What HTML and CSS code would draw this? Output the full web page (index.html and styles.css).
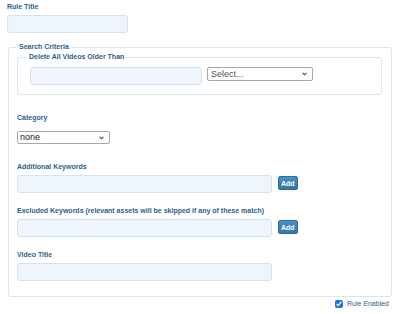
FILE: index.html
```html
<!DOCTYPE html>
<html lang="en">
<head>
    <meta charset="UTF-8">
    <title>Rule Editor</title>
    <link rel="stylesheet" href="styles.css">
</head>
<body>
    <form class="rule-form" autocomplete="off">
        <div class="field">
            <label for="ruleTitle">Rule Title</label>
            <input type="text" id="ruleTitle" class="text-input title-input">
        </div>

        <fieldset class="criteria">
            <legend>Search Criteria</legend>

            <fieldset class="age-group">
                <legend>Delete All Videos Older Than</legend>
                <div class="age-row">
                    <input type="text" id="ageValue" class="text-input age-input">
                    <select id="ageUnit" class="native-select unit-select">
                        <option>Select...</option>
                        <option>Days</option>
                        <option>Weeks</option>
                        <option>Months</option>
                    </select>
                </div>
            </fieldset>

            <div class="field category-field">
                <label for="category">Category</label>
                <select id="category" class="native-select category-select">
                    <option>none</option>
                </select>
            </div>

            <div class="field keyword-field first-keyword">
                <label for="addKeywords">Additional Keywords</label>
                <div class="add-row">
                    <input type="text" id="addKeywords" class="text-input wide-input">
                    <button type="button" class="add-btn">Add</button>
                </div>
            </div>

            <div class="field keyword-field">
                <label for="excKeywords">Excluded Keywords (relevant assets will be skipped if any of these match)</label>
                <div class="add-row">
                    <input type="text" id="excKeywords" class="text-input wide-input">
                    <button type="button" class="add-btn">Add</button>
                </div>
            </div>

            <div class="field keyword-field">
                <label for="videoTitle">Video Title</label>
                <input type="text" id="videoTitle" class="text-input wide-input">
            </div>
        </fieldset>

        <div class="enabled-row">
            <input type="checkbox" id="ruleEnabled" checked>
            <label for="ruleEnabled">Rule Enabled</label>
        </div>
    </form>
</body>
</html>
```

FILE: styles.css
```css
body {
    margin: 0;
    background: #fff;
    font-family: 'Liberation Sans', Arial, sans-serif;
    font-size: 7px;
    color: #2d5e8b;
}
.rule-form {
    padding: 2px 8px 0 7px;
}
.field label {
    display: block;
    font-weight: bold;
    line-height: 10px;
    margin-bottom: 3px;
    color: #2d5e8b;
}
.text-input {
    box-sizing: border-box;
    height: 18px;
    margin: 0;
    padding: 0 4px;
    background: #eef5fd;
    border: 1px solid #d2e2f1;
    border-radius: 3px;
    font-family: inherit;
    font-size: 9px;
    outline: none;
}
.title-input {
    width: 121px;
}
fieldset {
    margin: 0;
    border: 1px solid #d9e6f1;
    border-radius: 3px;
    min-width: 0;
}
legend {
    padding: 0 2px;
    font-weight: bold;
    line-height: 10px;
    color: #2d5e8b;
}
.criteria {
    margin: 9px 0 0 1px;
    padding: 0 9px 15px 8px;
}
.age-group {
    padding: 5px 9px 9px 9px;
}
.age-row {
    display: flex;
    align-items: flex-start;
    gap: 5px;
    padding-left: 3px;
}
.age-input {
    width: 172px;
}
/* plain select with a small chevron like the old browser default */
.native-select {
    box-sizing: border-box;
    height: 14px;
    margin: 0;
    padding: 0 10px 0 3px;
    appearance: none;
    background: #fff url("data:image/svg+xml,%3Csvg xmlns='http://www.w3.org/2000/svg' width='5' height='4' viewBox='0 0 5 4'%3E%3Cpath d='M0.6 0.8 L2.5 2.8 L4.4 0.8' fill='none' stroke='%23444' stroke-width='1.1'/%3E%3C/svg%3E") no-repeat right 5px center;
    border: 1px solid #a6a6a6;
    border-radius: 2px;
    font-family: inherit;
    font-size: 9px;
    line-height: 12px;
    color: #333;
}
.unit-select {
    width: 106px;
    color: #555;
}
.category-field {
    margin-top: 18px;
}
.category-select {
    width: 93px;
    height: 13px;
    margin-top: 5px;
    padding-left: 2px;
    line-height: 11px;
    color: #222;
}
.keyword-field {
    margin-top: 13px;
}
.first-keyword {
    margin-top: 18px;
}
.add-row {
    display: flex;
    align-items: flex-start;
    gap: 6px;
}
.wide-input {
    width: 255px;
}
.add-btn {
    margin-top: 1px;
    height: 14px;
    padding: 0 2px;
    background: linear-gradient(#4a90c3, #3077ab);
    border: 1px solid #2d6c9d;
    border-radius: 2px;
    color: #fff;
    font-family: inherit;
    font-size: 7px;
    font-weight: bold;
    cursor: pointer;
}
.enabled-row {
    display: flex;
    align-items: center;
    justify-content: flex-end;
    gap: 4px;
    padding: 2px 3px 0 0;
}
.enabled-row input {
    width: 8px;
    height: 8px;
    margin: 0;
    accent-color: #1a73e8;
}
.enabled-row label {
    line-height: 10px;
    color: #2d5e8b;
}
```
